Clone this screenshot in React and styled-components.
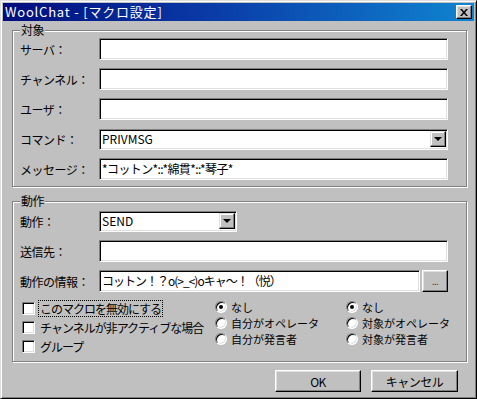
import React from 'react'
import styled, { createGlobalStyle } from 'styled-components'

const GlobalStyle = createGlobalStyle`
  html, body {
    margin: 0;
    padding: 0;
    background: #c0c0c0;
  }
  body {
    font-family: "Noto Sans CJK JP", "Liberation Sans", sans-serif;
    font-size: 12px;
    color: #000;
  }
`

const Window = styled.div`
  width: 477px;
  height: 399px;
  box-sizing: border-box;
  background: #c0c0c0;
  border: 1px solid;
  border-color: #dfdfdf #000 #000 #dfdfdf;
  box-shadow: inset 1px 1px #fff, inset -1px -1px #808080;
  padding: 2px;
  display: flex;
  flex-direction: column;
`

const TitleBar = styled.div`
  height: 18px;
  flex: none;
  display: flex;
  align-items: center;
  justify-content: space-between;
  padding: 0 2px 0 2px;
  background: linear-gradient(90deg, #000c7c 0%, #0a3ca8 45%, #1084d0 100%);
  color: #fff;
  font-size: 13px;
  letter-spacing: 0.8px;
  line-height: 18px;
  white-space: nowrap;
`

const CloseButton = styled.div`
  width: 16px;
  height: 14px;
  box-sizing: border-box;
  background: #c0c0c0;
  border: 1px solid;
  border-color: #fff #000 #000 #fff;
  box-shadow: inset -1px -1px #808080, inset 1px 1px #dfdfdf;
  display: flex;
  align-items: center;
  justify-content: center;
`

const Body = styled.div`
  flex: 1;
  display: flex;
  flex-direction: column;
  padding: 9px 7px 0 9px;
`

const Group = styled.div`
  position: relative;
  border: 1px solid #808080;
  box-shadow: inset 1px 1px #fff, 1px 1px #fff;
  padding: ${p => p.$pad};
  margin-top: ${p => p.$top || 0}px;
  display: flex;
  flex-direction: column;
  gap: 8px;
`

const Caption = styled.span`
  position: absolute;
  top: -9px;
  left: 7px;
  padding: 0 1px;
  background: #c0c0c0;
  line-height: 16px;
  letter-spacing: -0.5px;
`

const Row = styled.div`
  display: flex;
  align-items: center;
  height: 22px;
`

const Label = styled.div`
  width: 79px;
  flex: none;
  white-space: nowrap;
  letter-spacing: -0.5px;
`

const Sunken = styled.div`
  box-sizing: border-box;
  height: ${p => p.$h || 22}px;
  width: ${p => (p.$w ? `${p.$w}px` : 'auto')};
  flex: ${p => (p.$w ? 'none' : 1)};
  background: #fff;
  border: 1px solid;
  border-color: #808080 #fff #fff #808080;
  box-shadow: inset 1px 1px #000, inset -1px -1px #dfdfdf;
  display: flex;
  align-items: center;
  padding: 0 0 0 2px;
  white-space: nowrap;
  overflow: hidden;
`

const Value = styled.span`
  flex: 1;
  line-height: 16px;
  letter-spacing: ${p => p.$ls || 0}px;
`

const DropButton = styled.div`
  width: 16px;
  height: 16px;
  box-sizing: border-box;
  margin-right: 1px;
  background: #c0c0c0;
  border: 1px solid;
  border-color: #dfdfdf #000 #000 #dfdfdf;
  box-shadow: inset -1px -1px #808080, inset 1px 1px #fff;
  display: flex;
  align-items: center;
  justify-content: center;
`

const Arrow = styled.div`
  width: 0;
  height: 0;
  border-left: 4px solid transparent;
  border-right: 4px solid transparent;
  border-top: 4px solid #000;
`

const Button = styled.div`
  box-sizing: border-box;
  width: ${p => p.$w}px;
  height: 22px;
  flex: none;
  background: #c0c0c0;
  border: 1px solid;
  border-color: #fff #000 #000 #fff;
  box-shadow: inset -1px -1px #808080, inset 1px 1px #dfdfdf;
  display: flex;
  align-items: center;
  justify-content: center;
  font-size: ${p => p.$fs || 12}px;
  color: ${p => p.$color || '#000'};
  margin-left: ${p => p.$ml || 0}px;
  letter-spacing: -0.5px;
`

const Options = styled.div`
  display: grid;
  grid-template-columns: 195px 131px 1fr;
  margin-top: -1px;
`

const Column = styled.div`
  display: flex;
  flex-direction: column;
  padding-left: ${p => p.$pl || 0}px;
`

const CheckRow = styled.div`
  display: flex;
  align-items: center;
  height: 19px;
  gap: 4px;
`

const CheckBox = styled.div`
  width: 13px;
  height: 13px;
  box-sizing: border-box;
  flex: none;
  background: #fff;
  border: 1px solid;
  border-color: #808080 #fff #fff #808080;
  box-shadow: inset 1px 1px #000, inset -1px -1px #dfdfdf;
`

const CheckText = styled.span`
  display: block;
  height: 15px;
  line-height: 15px;
  padding: 0 1px;
  letter-spacing: -1px;
  outline: ${p => (p.$focus ? '1px dotted #000' : 'none')};
  white-space: nowrap;
`

const RadioRow = styled.div`
  display: flex;
  align-items: center;
  height: 16px;
  gap: 4px;
`

const RadioText = styled.span`
  display: block;
  font-size: 11px;
  line-height: 16px;
  white-space: nowrap;
`

const Radio = styled.div`
  width: 12px;
  height: 12px;
  box-sizing: border-box;
  flex: none;
  border-radius: 50%;
  background: #fff;
  border: 1px solid;
  border-color: #808080 #fff #fff #808080;
  box-shadow: inset 1px 1px #000, inset -1px -1px #dfdfdf;
  display: flex;
  align-items: center;
  justify-content: center;
  &::after {
    content: '';
    width: 4px;
    height: 4px;
    border-radius: 50%;
    background: ${p => (p.$on ? '#000' : 'transparent')};
  }
`

const Footer = styled.div`
  display: flex;
  justify-content: flex-end;
  padding: 8px 9px 0 0;
`

function Field({ label, value, children }) {
  return (
    <Row>
      <Label>{label}</Label>
      {children || (
        <Sunken>
          <Value $ls={-0.6}>{value}</Value>
        </Sunken>
      )}
    </Row>
  )
}

function Combo({ value, width }) {
  return (
    <Sunken $h={21} $w={width}>
      <Value>{value}</Value>
      <DropButton>
        <Arrow />
      </DropButton>
    </Sunken>
  )
}

function RadioGroup({ items, pl }) {
  return (
    <Column $pl={pl}>
      {items.map((t, i) => (
        <RadioRow key={t}>
          <Radio $on={i === 0} />
          <RadioText>{t}</RadioText>
        </RadioRow>
      ))}
    </Column>
  )
}

export default function App() {
  return (
    <>
      <GlobalStyle />
      <Window>
        <TitleBar>
          <span>WoolChat - [マクロ設定]</span>
          <CloseButton>
            <svg width="8" height="7" viewBox="0 0 8 7">
              <path d="M0 0h2l2 2.5 2-2.5h2L5 3.5 8 7H6L4 4.5 2 7H0l3-3.5z" fill="#000" />
            </svg>
          </CloseButton>
        </TitleBar>
        <Body>
          <Group $pad="7px 18px 6px 7px">
            <Caption>対象</Caption>
            <Field label="サーバ：" />
            <Field label="チャンネル：" />
            <Field label="ユーザ：" />
            <Field label="コマンド：">
              <Combo value="PRIVMSG" />
            </Field>
            <Field label="メッセージ：" value="*コットン*::*綿貫*::*琴子*" />
          </Group>

          <Group $top={14} $pad="8px 18px 5px 7px">
            <Caption>動作</Caption>
            <Field label="動作：">
              <Combo value="SEND" width={138} />
            </Field>
            <Field label="送信先：" />
            <Field label="動作の情報：">
              <Sunken>
                <Value $ls={-1}>コットン！？o(&gt;_&lt;)oキャ～！（悦）</Value>
              </Sunken>
              <Button $w={26} $ml={2} $fs={9} $color="#404040">...</Button>
            </Field>
            <Options>
              <Column $pl={2}>
                <CheckRow>
                  <CheckBox />
                  <CheckText $focus>このマクロを無効にする</CheckText>
                </CheckRow>
                <CheckRow>
                  <CheckBox />
                  <CheckText>チャンネルが非アクティブな場合</CheckText>
                </CheckRow>
                <CheckRow>
                  <CheckBox />
                  <CheckText>グループ</CheckText>
                </CheckRow>
              </Column>
              <RadioGroup items={['なし', '自分がオペレータ', '自分が発言者']} />
              <RadioGroup items={['なし', '対象がオペレータ', '対象が発言者']} />
            </Options>
          </Group>

          <Footer>
            <Button $w={86}>OK</Button>
            <Button $w={87} $ml={10}>キャンセル</Button>
          </Footer>
        </Body>
      </Window>
    </>
  )
}
